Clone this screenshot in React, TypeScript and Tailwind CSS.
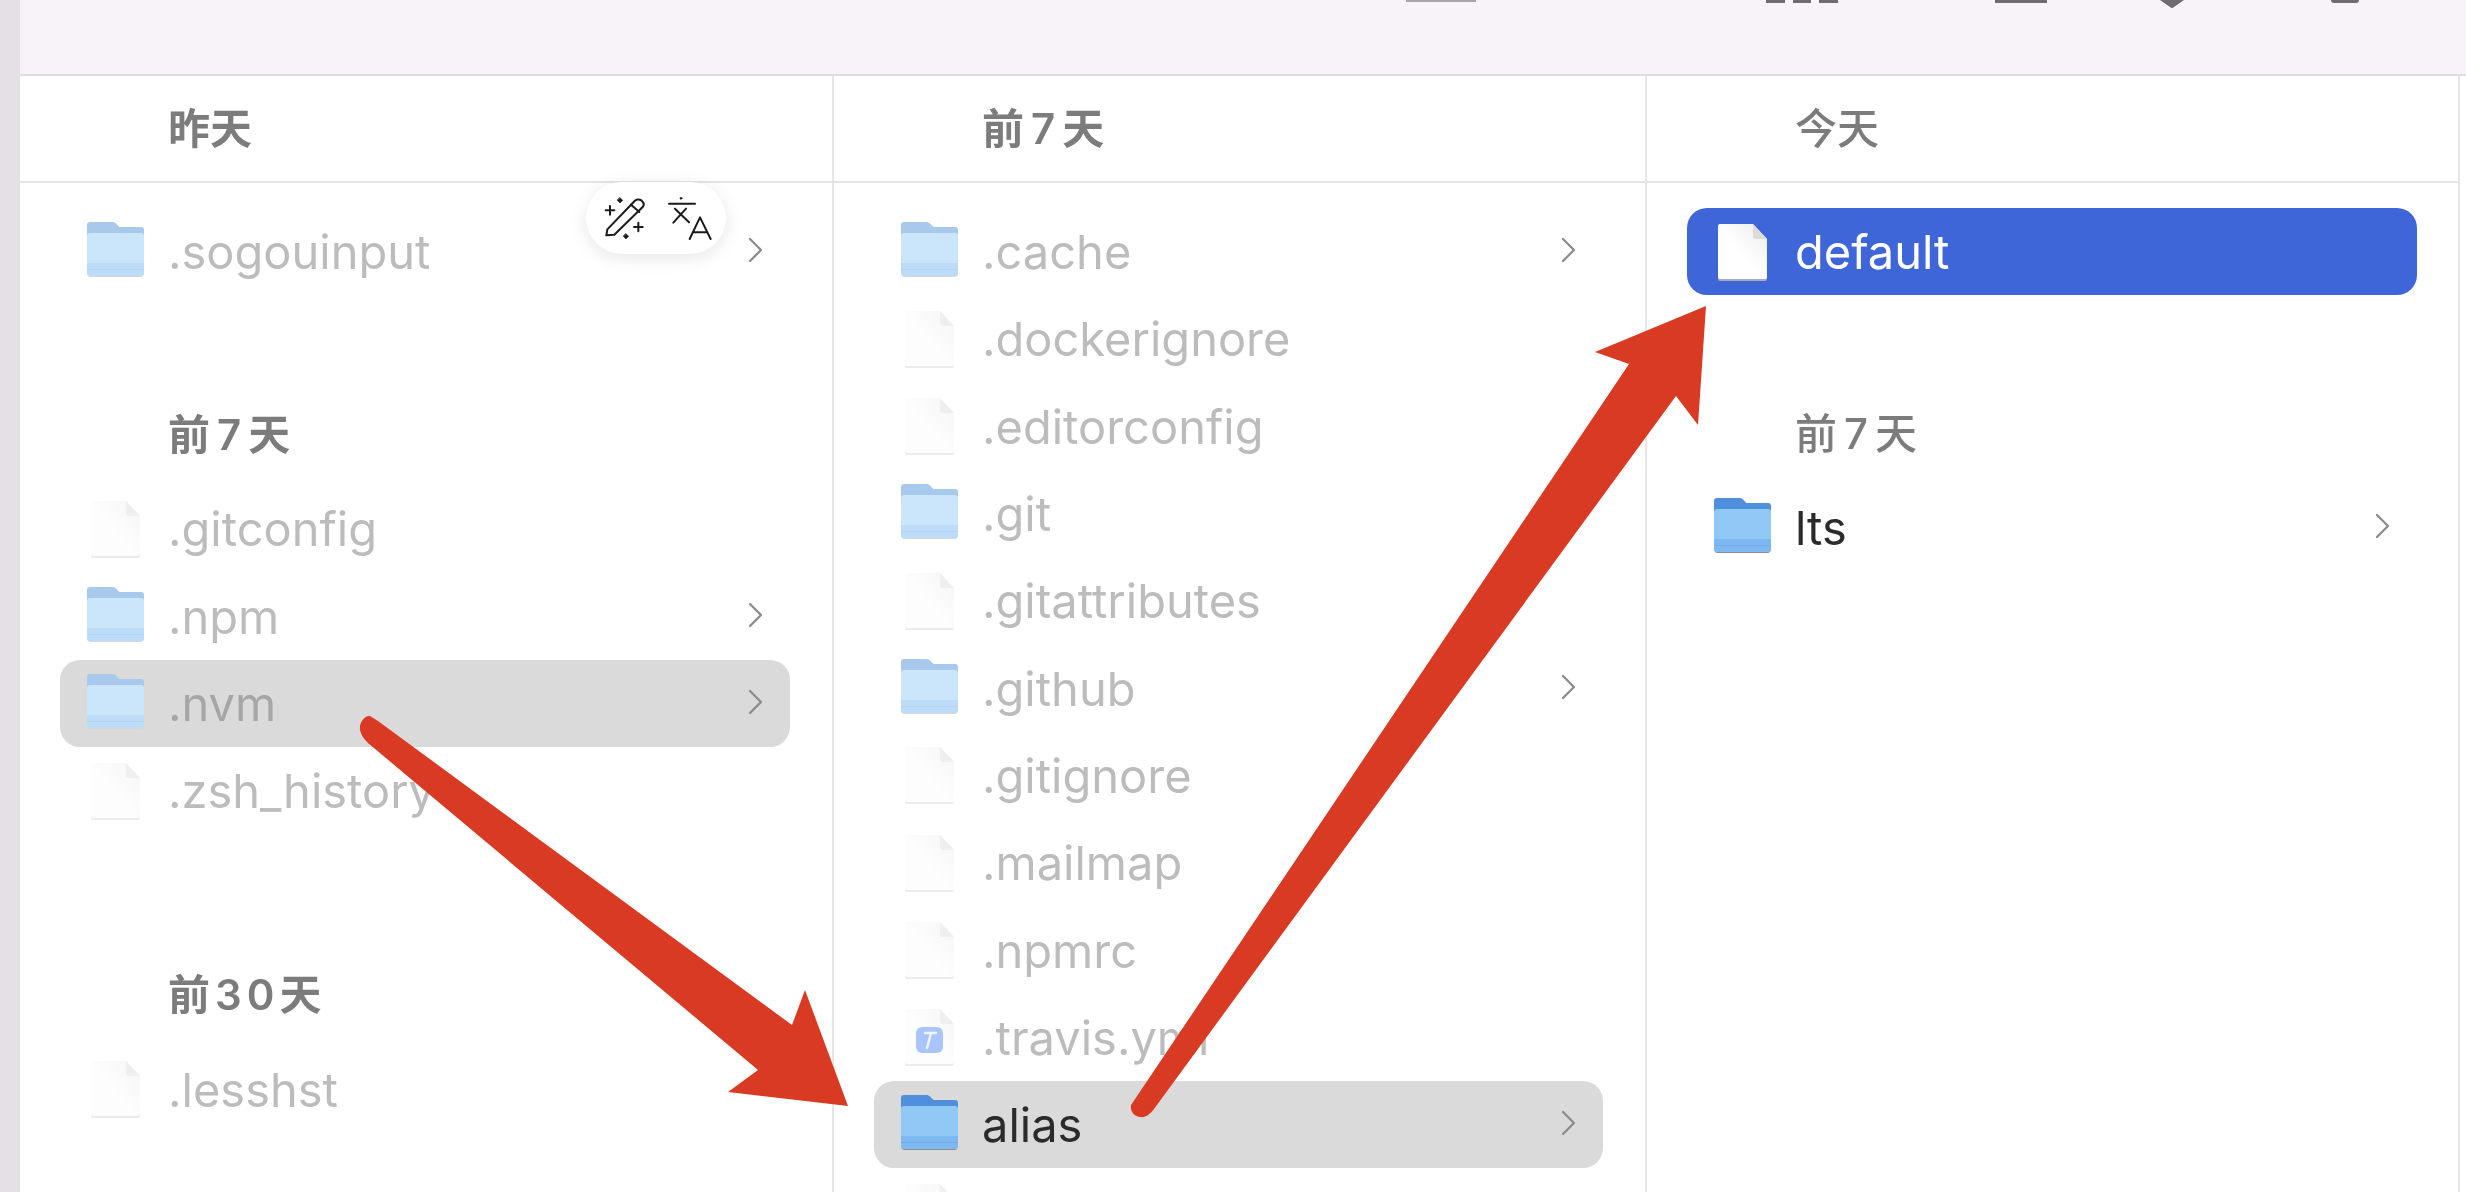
import React from "react";

const uiFont = "font-['Inter','Noto_Sans_CJK_SC',sans-serif]";

function Folder({ faded }: { faded: boolean }) {
  const tab = faded ? "#a9c9ec" : "#4f8fdb";
  const body = faded ? "#cbe6fb" : "#90c8f6";
  const band = faded ? "#bcdcf8" : "#7db9f0";
  const line = faded ? "#a6cbef" : "#5a9be0";
  const shadow = faded ? "#d6d6d6" : "#8d8d8d";
  return (
    <svg width="57" height="56" viewBox="0 0 57 56" className="shrink-0 mt-[-3px]">
      <rect x="0.5" y="12" width="56" height="43" rx="3" fill={shadow} />
      <path d="M0 3a3 3 0 0 1 3-3h22c2 0 3 .6 4.5 2l3 3H54a3 3 0 0 1 3 3v14H0z" fill={tab} />
      <rect x="0" y="11" width="57" height="43" rx="3" fill={body} />
      <path d="M0 41h57v10a3 3 0 0 1-3 3H3a3 3 0 0 1-3-3z" fill={band} />
      <rect x="0" y="47" width="57" height="1" fill={line} opacity="0.45" />
    </svg>
  );
}

function FileIcon({ tone, travis }: { tone: "faded" | "active"; travis?: boolean }) {
  const top = tone === "active" ? "#ffffff" : "#fdfdfd";
  const bottom = tone === "active" ? "#ececec" : "#f6f6f6";
  const id = tone === "active" ? "fileA" : "fileF";
  return (
    <div className="w-[57px] shrink-0 flex justify-center">
      <svg width="52" height="58" viewBox="0 0 52 58">
        <defs>
          <linearGradient id={id} x1="0" y1="1" x2="1" y2="0">
            <stop offset="0" stopColor={top} />
            <stop offset="0.45" stopColor={top} />
            <stop offset="1" stopColor={bottom} />
          </linearGradient>
        </defs>
        <path
          d="M3 1h33l14 15v39a2 2 0 0 1-2 2H3a2 2 0 0 1-2-2V3a2 2 0 0 1 2-2z"
          fill={tone === "active" ? "#a9a9c8" : "#ececec"}
          transform="translate(0 1)"
        />
        <path
          d="M3 1h33l14 15v38a2 2 0 0 1-2 2H3a2 2 0 0 1-2-2V3a2 2 0 0 1 2-2z"
          fill={`url(#${id})`}
        />
        <path d="M36 1l14 15H39a3 3 0 0 1-3-3z" fill={tone === "active" ? "#dcdcdc" : "#efefef"} />
        {travis ? (
          <g>
            <rect x="12" y="19" width="27" height="26" rx="6" fill="#a9c5fb" />
            <path d="M21 25h11" stroke="#eef3ff" strokeWidth="2.5" strokeLinecap="round" />
            <path d="M27 25l-4 15" stroke="#eef3ff" strokeWidth="2.5" strokeLinecap="round" />
          </g>
        ) : null}
      </svg>
    </div>
  );
}

function Chevron() {
  return (
    <svg width="16" height="26" viewBox="0 0 16 26" className="shrink-0 mt-[-3px]">
      <path d="M2 2l11 11L2 24" fill="none" stroke="#8c8c8c" strokeWidth="2.3" strokeLinecap="round" strokeLinejoin="round" />
    </svg>
  );
}

type Item = {
  name: string;
  kind: "folder" | "file" | "travis";
  state?: "faded" | "active" | "selected" | "focused";
  chevron?: boolean;
};

function Row({ item }: { item: Item }) {
  const state = item.state ?? "faded";
  const bg =
    state === "selected" ? "bg-[#3f66d8]" : state === "focused" ? "bg-[#dadada]" : "";
  const text =
    state === "selected"
      ? "text-white"
      : state === "active"
        ? "text-[#2b2b2b]"
        : state === "focused"
          ? item.kind === "folder" && item.name === "alias"
            ? "text-[#2b2b2b]"
            : "text-[#a6a6a6]"
          : "text-[#bcbcbc]";
  const faded = state === "faded" || (state === "focused" && item.name !== "alias");
  return (
    <div className={`h-[87.3px] shrink-0 flex items-center pl-[27px] pr-[26px] rounded-[20px] ${bg}`}>
      {item.kind === "folder" ? (
        <Folder faded={faded} />
      ) : (
        <FileIcon tone={state === "selected" ? "active" : "faded"} travis={item.kind === "travis"} />
      )}
      <span className={`ml-[24px] flex-1 text-[47px] leading-none whitespace-nowrap ${text}`}>{item.name}</span>
      {item.chevron ? <Chevron /> : null}
    </div>
  );
}

function Heading({ label, blockClass, spaceClass, light }: { label: string; blockClass: string; spaceClass: string; light?: boolean }) {
  return (
    <div className={`flex items-end pl-[108px] pb-[28px] ${blockClass}`}>
      <span className={`text-[42px] leading-[44px] text-[#7c7c7c] ${light ? "font-medium" : "font-semibold"} ${spaceClass}`}>
        {label}
      </span>
    </div>
  );
}

function ColumnHeader({ label, spaced, light }: { label: string; spaced?: boolean; light?: boolean }) {
  return (
    <div className="h-[107px] shrink-0 flex items-center border-b-2 border-[#e4e4e4] pl-[148px]">
      <span
        className={`text-[42px] leading-[44px] text-[#7c7c7c] ${light ? "font-medium" : "font-semibold"} ${spaced ? "tracking-[7px]" : ""}`}
      >
        {label}
      </span>
    </div>
  );
}

function ToolbarBits() {
  return (
    <div className="flex items-start h-[76px] shrink-0 bg-[#f7f3f9] border-b-2 border-[#e0dde2]">
      <div className="ml-[1386px] w-[70px] h-[2px] bg-[#a7a5a9]" />
      <div className="ml-[290px] w-[19px] h-[3px] bg-[#6f6b72]" />
      <div className="ml-[8px] w-[18px] h-[3px] bg-[#6f6b72]" />
      <div className="ml-[8px] w-[19px] h-[3px] bg-[#6f6b72]" />
      <div className="ml-[157px] w-[52px] h-[3px] bg-[#6f6b72]" />
      <svg width="24" height="8" viewBox="0 0 24 8" className="ml-[113px]">
        <path d="M0 0h24l-10 7a3 3 0 0 1-4 0z" fill="#6f6b72" />
      </svg>
      <div className="ml-[147px] w-[28px] h-[3px] rounded-b-full bg-[#6f6b72]" />
    </div>
  );
}

function Popup() {
  return (
    <div className="absolute left-[586px] top-[182px] w-[140px] h-[72px] rounded-full bg-white shadow-[0_4px_18px_rgba(0,0,0,0.10)]">
      <svg width="140" height="72" viewBox="78 35 420 216" fill="none" stroke="#1b1b1b" strokeWidth="6" strokeLinecap="round" strokeLinejoin="round">
        <path d="M139 195l3-18 82-85c5-5 14-6 21-1 7 6 8 13 3 19l-85 83z" />
        <path d="M213 103l25 22" />
        <path d="M150 107v26M137 120h26" />
        <path d="M180 82l8 8-8 8-8-8z" fill="#1b1b1b" strokeWidth="2" />
        <path d="M235 157v26M222 170h26" />
        <path d="M198 190l8 8-8 8-8-8z" fill="#1b1b1b" strokeWidth="2" />
        <path d="M327 100h78" />
        <circle cx="363" cy="84" r="3" fill="#1b1b1b" strokeWidth="2" />
        <path d="M345 115l42 41M340 157l38-42" />
        <path d="M389 206l31-65 32 65M401 186h41" />
      </svg>
    </div>
  );
}

function Arrows() {
  return (
    <svg width="2466" height="1192" viewBox="0 0 2466 1192" className="absolute left-0 top-0 pointer-events-none">
      <path
        d="M370 716C365 715 359 722 360 730C361 735 364 739 368 743L758 1070L728 1092L848 1106L805 990L792 1025L378 721Z"
        fill="#d93a24"
      />
      <path
        d="M1131 1105C1130 1110 1133 1116 1140 1117C1146 1118 1150 1114 1154 1109L1676 396L1698 425L1706 306L1595 352L1629 364Z"
        fill="#d93a24"
      />
    </svg>
  );
}

const col2: Item[] = [
  { name: ".cache", kind: "folder", chevron: true },
  { name: ".dockerignore", kind: "file" },
  { name: ".editorconfig", kind: "file" },
  { name: ".git", kind: "folder" },
  { name: ".gitattributes", kind: "file" },
  { name: ".github", kind: "folder", chevron: true },
  { name: ".gitignore", kind: "file" },
  { name: ".mailmap", kind: "file" },
  { name: ".npmrc", kind: "file" },
  { name: ".travis.yml", kind: "travis" },
  { name: "alias", kind: "folder", state: "focused", chevron: true },
  { name: "bash_completion", kind: "file" },
];

export default function App() {
  return (
    <div className={`relative w-[2466px] h-[1192px] overflow-hidden flex bg-white ${uiFont}`}>
      <div className="w-[20px] shrink-0 bg-[#e4e0e6]" />
      <div className="flex-1 flex flex-col min-w-0">
        <ToolbarBits />
        <div className="flex flex-1 min-h-0 overflow-hidden blur-[0.7px]">
          {/* column 1 */}
          <div className="w-[814px] shrink-0 border-r-2 border-[#e6e6e6] flex flex-col">
            <ColumnHeader label="昨天" />
            <div className="flex flex-col ml-[40px] mr-[42px] pt-[25px]">
              <Row item={{ name: ".sogouinput", kind: "folder", chevron: true }} />
              <Heading label="前7天" spaceClass="tracking-[7px]" blockClass="h-[190px]" />
              <Row item={{ name: ".gitconfig", kind: "file" }} />
              <Row item={{ name: ".npm", kind: "folder", chevron: true }} />
              <Row item={{ name: ".nvm", kind: "folder", state: "focused", chevron: true }} />
              <Row item={{ name: ".zsh_history", kind: "file" }} />
              <Heading label="前30天" spaceClass="tracking-[5px]" blockClass="h-[211px]" />
              <Row item={{ name: ".lesshst", kind: "file" }} />
            </div>
          </div>
          {/* column 2 */}
          <div className="w-[813px] shrink-0 border-r-2 border-[#e6e6e6] flex flex-col">
            <ColumnHeader label="前7天" spaced />
            <div className="flex flex-col ml-[40px] mr-[42px] pt-[25px]">
              {col2.map((item) => (
                <Row key={item.name} item={item} />
              ))}
            </div>
          </div>
          {/* column 3 */}
          <div className="w-[813px] shrink-0 border-r-2 border-[#e6e6e6] flex flex-col">
            <ColumnHeader label="今天" light />
            <div className="flex flex-col ml-[40px] mr-[41px] pt-[25px]">
              <Row item={{ name: "default", kind: "file", state: "selected" }} />
              <Heading label="前7天" spaceClass="tracking-[7px]" light blockClass="h-[189px]" />
              <Row item={{ name: "lts", kind: "folder", state: "active", chevron: true }} />
            </div>
          </div>
        </div>
      </div>
      <Popup />
      <Arrows />
    </div>
  );
}
